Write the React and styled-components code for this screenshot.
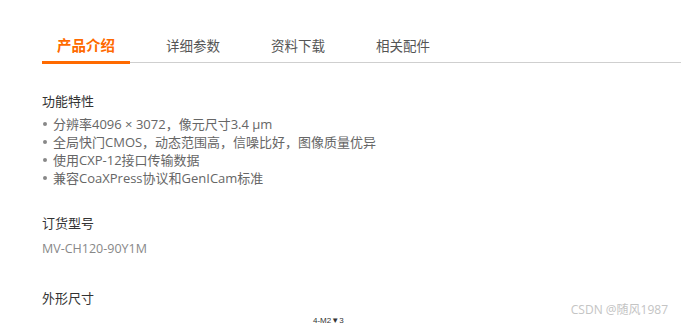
import React from 'react'
import styled, { createGlobalStyle } from 'styled-components'

const GlobalStyle = createGlobalStyle`
  html, body {
    margin: 0;
    padding: 0;
    background: #fff;
  }
  body {
    font-family: "Open Sans", "Noto Sans CJK SC", sans-serif;
  }
`

const Page = styled.div`
  position: relative;
  width: 681px;
  height: 324px;
  overflow: hidden;
  padding: 36px 0 0 42px;
  box-sizing: border-box;
`

const TabBar = styled.div`
  display: flex;
  gap: 21px;
  border-bottom: 1px solid #cfcfcf;
`

const Tab = styled.div`
  position: relative;
  padding: 0 15px 6px;
  line-height: 20px;
  font-size: ${p => (p.$active ? '14.5px' : '13.5px')};
  font-weight: ${p => (p.$active ? 700 : 400)};
  color: ${p => (p.$active ? '#ff6a00' : '#555')};
  cursor: pointer;

  &::after {
    content: '';
    display: ${p => (p.$active ? 'block' : 'none')};
    position: absolute;
    left: 0;
    right: 0;
    bottom: -2px;
    height: 3px;
    background: #ff6a00;
  }
`

const Section = styled.section`
  margin-top: ${p => p.$top}px;
`

const Title = styled.h3`
  margin: 0;
  font-size: 13px;
  font-weight: 400;
  line-height: 18px;
  color: #333;
`

const List = styled.ul`
  list-style: none;
  margin: 5px 0 0;
  padding: 0;
`

const Item = styled.li`
  display: flex;
  align-items: center;
  gap: 6px;
  font-size: 13px;
  line-height: 18px;
  color: #666;

  &::before {
    content: '';
    width: 4px;
    height: 4px;
    margin-left: 1px;
    border-radius: 50%;
    background: #888;
  }
`

const Model = styled.p`
  margin: 8px 0 0;
  font-size: 12.5px;
  line-height: 18px;
  color: #888;
`

const Drawing = styled.div`
  display: flex;
  padding-left: 271px;
  margin-top: 9px;
`

const DimLabel = styled.span`
  font-family: "Liberation Sans", Arial, sans-serif;
  font-size: 8px;
  line-height: 10px;
  color: #333;
`

const Watermark = styled.div`
  position: absolute;
  right: 13px;
  bottom: 6px;
  font-size: 12px;
  line-height: 16px;
  color: #c4c4c4;
`

const tabs = ['产品介绍', '详细参数', '资料下载', '相关配件']

const features = [
  '分辨率4096 × 3072，像元尺寸3.4 µm',
  '全局快门CMOS，动态范围高，信噪比好，图像质量优异',
  '使用CXP-12接口传输数据',
  '兼容CoaXPress协议和GenICam标准',
]

export default function App() {
  return (
    <>
      <GlobalStyle />
      <Page>
        <TabBar>
          {tabs.map((t, i) => (
            <Tab key={t} $active={i === 0}>{t}</Tab>
          ))}
        </TabBar>

        <Section $top={29}>
          <Title>功能特性</Title>
          <List>
            {features.map(f => (
              <Item key={f}>{f}</Item>
            ))}
          </List>
        </Section>

        <Section $top={27}>
          <Title>订货型号</Title>
          <Model>MV-CH120-90Y1M</Model>
        </Section>

        <Section $top={31}>
          <Title>外形尺寸</Title>
          <Drawing>
            <DimLabel>4-M2▼3</DimLabel>
          </Drawing>
        </Section>

        <Watermark>CSDN @随风1987</Watermark>
      </Page>
    </>
  )
}
